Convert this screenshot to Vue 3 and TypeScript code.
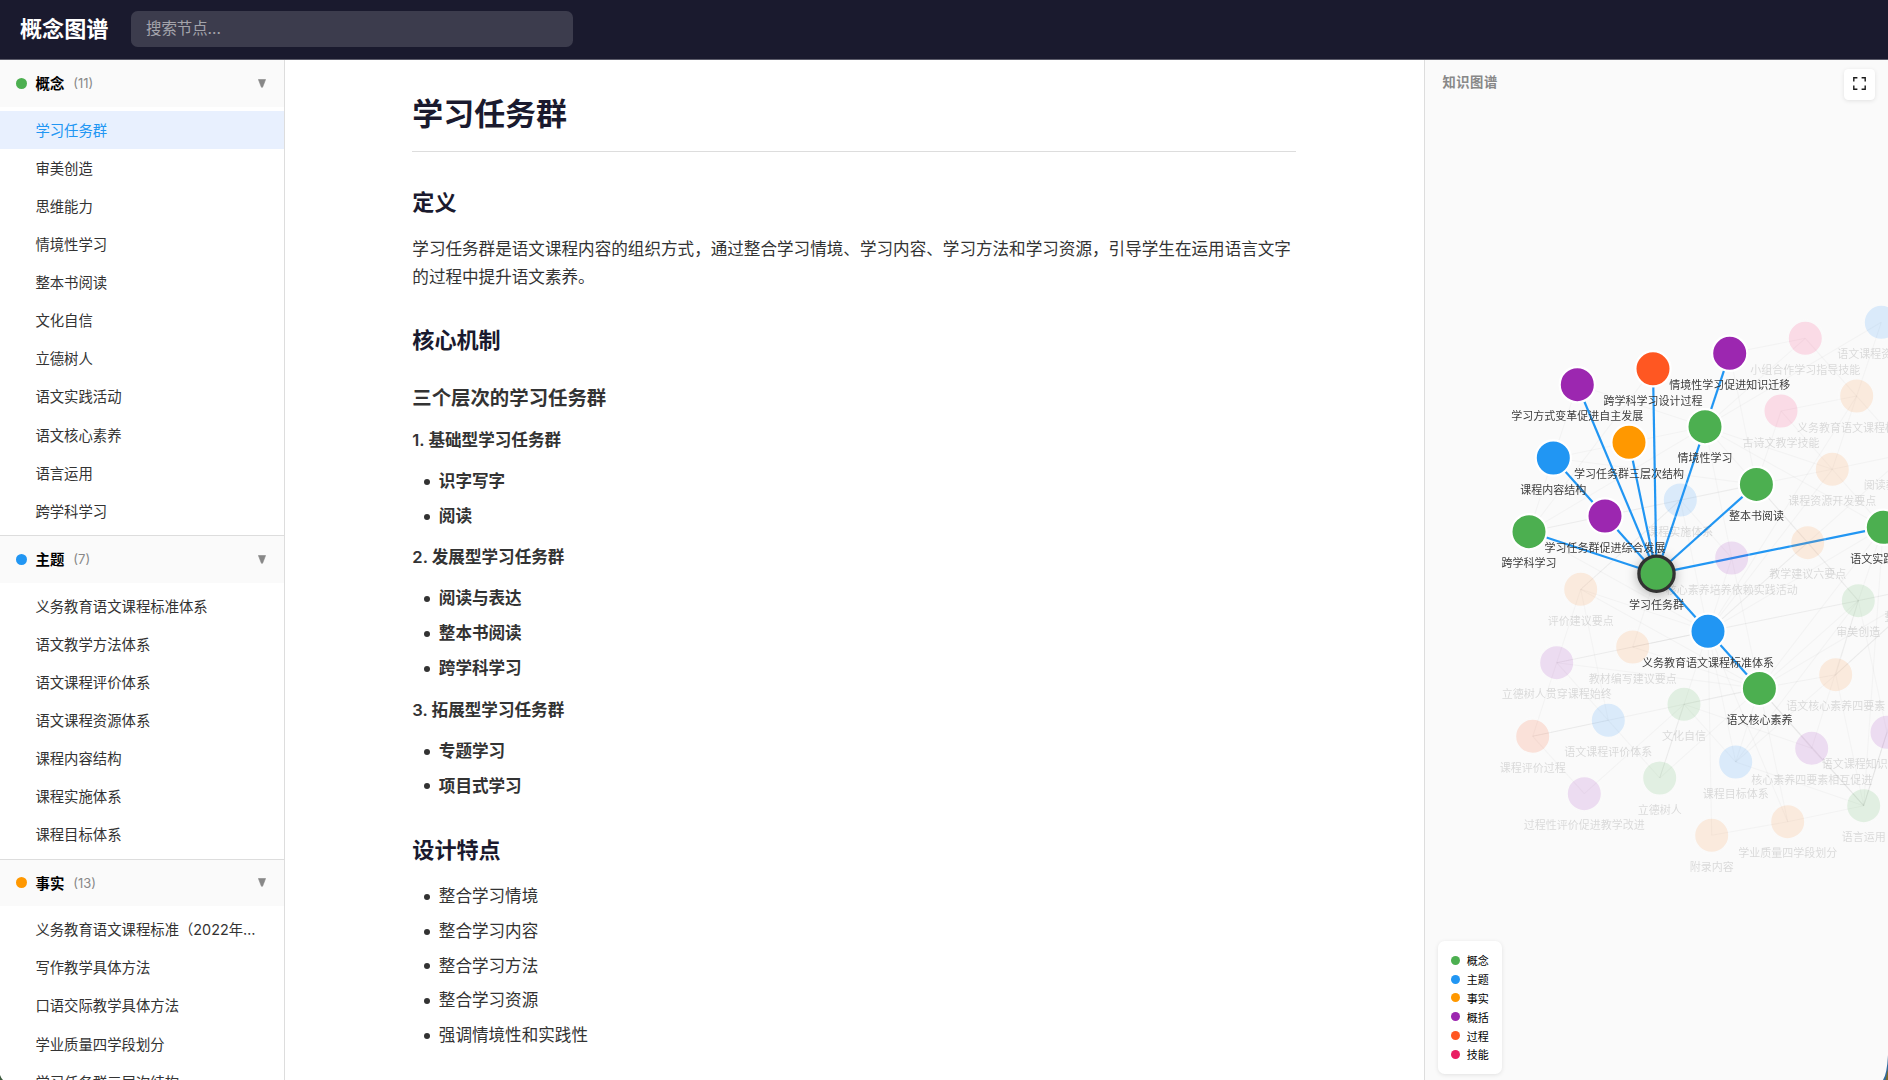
<script setup lang="ts">
type Kind = 'concept' | 'topic' | 'fact' | 'general' | 'process' | 'skill'

interface Section { name: string; count: number; kind: Kind; items: string[] }
interface GraphNode { id: string; x: number; y: number; kind: Kind; label: string; on?: boolean }

const colors: Record<Kind, string> = {
  concept: '#4caf50',
  topic: '#2196f3',
  fact: '#ff9800',
  general: '#9c27b0',
  process: '#ff5722',
  skill: '#e91e63',
}

// Fills used by nodes outside the current selection, drawn at low opacity
const dimColors: Record<Kind, string> = {
  ...colors,
  concept: '#5cb860',
  topic: '#2b95ff',
  fact: '#ff9440',
  general: '#a436c0',
  skill: '#ff2f78',
}

const sections: Section[] = [
  {
    name: '概念', count: 11, kind: 'concept',
    items: ['学习任务群', '审美创造', '思维能力', '情境性学习', '整本书阅读', '文化自信', '立德树人', '语文实践活动', '语文核心素养', '语言运用', '跨学科学习'],
  },
  {
    name: '主题', count: 7, kind: 'topic',
    items: ['义务教育语文课程标准体系', '语文教学方法体系', '语文课程评价体系', '语文课程资源体系', '课程内容结构', '课程实施体系', '课程目标体系'],
  },
  {
    name: '事实', count: 13, kind: 'fact',
    items: ['义务教育语文课程标准（2022年版）', '写作教学具体方法', '口语交际教学具体方法', '学业质量四学段划分', '学习任务群三层次结构'],
  },
]
const active = '学习任务群'

const groups = [
  { title: '1. 基础型学习任务群', items: ['识字写字', '阅读'] },
  { title: '2. 发展型学习任务群', items: ['阅读与表达', '整本书阅读', '跨学科学习'] },
  { title: '3. 拓展型学习任务群', items: ['专题学习', '项目式学习'] },
]
const features = ['整合学习情境', '整合学习内容', '整合学习方法', '整合学习资源', '强调情境性和实践性']

const legend: { name: string; kind: Kind }[] = [
  { name: '概念', kind: 'concept' },
  { name: '主题', kind: 'topic' },
  { name: '事实', kind: 'fact' },
  { name: '概括', kind: 'general' },
  { name: '过程', kind: 'process' },
  { name: '技能', kind: 'skill' },
]

const nodes: GraphNode[] = [
  { id: 'zy', x: 1881.3, y: 322.3, kind: 'topic', label: '语文课程资源体系' },
  { id: 'xz', x: 1805.3, y: 338.3, kind: 'skill', label: '小组合作学习指导技能' },
  { id: 'bz', x: 1856.7, y: 396, kind: 'fact', label: '义务教育语文课程标准...' },
  { id: 'gs', x: 1781, y: 411, kind: 'skill', label: '古诗文教学技能' },
  { id: 'kf', x: 1832.3, y: 469.3, kind: 'fact', label: '课程资源开发要点' },
  { id: 'yd', x: 1907.7, y: 453.5, kind: 'fact', label: '阅读教学具体方法' },
  { id: 'ss', x: 1680.3, y: 500, kind: 'topic', label: '课程实施体系' },
  { id: 'jy', x: 1807.7, y: 542.7, kind: 'fact', label: '教学建议六要点' },
  { id: 'yl', x: 1731.7, y: 558, kind: 'general', label: '核心素养培养依赖实践活动' },
  { id: 'sm', x: 1858.3, y: 600.7, kind: 'concept', label: '审美创造' },
  { id: 'zh', x: 1934, y: 585, kind: 'process', label: '整本书阅读过程设计' },
  { id: 'sys', x: 1835.7, y: 674.7, kind: 'fact', label: '语文核心素养四要素' },
  { id: 'zs', x: 1887, y: 732.3, kind: 'general', label: '语文课程知识结构化整合...' },
  { id: 'xh', x: 1811.7, y: 748.3, kind: 'general', label: '核心素养四要素相互促进' },
  { id: 'mb', x: 1735.7, y: 762, kind: 'topic', label: '课程目标体系' },
  { id: 'yy', x: 1863.7, y: 805.7, kind: 'concept', label: '语言运用' },
  { id: 'xy', x: 1787.7, y: 821.7, kind: 'fact', label: '学业质量四学段划分' },
  { id: 'fl', x: 1711.7, y: 835.3, kind: 'fact', label: '附录内容' },
  { id: 'wh', x: 1684, y: 704.3, kind: 'concept', label: '文化自信' },
  { id: 'ld', x: 1659.7, y: 778, kind: 'concept', label: '立德树人' },
  { id: 'pj', x: 1580.7, y: 589.3, kind: 'fact', label: '评价建议要点' },
  { id: 'gc', x: 1556.7, y: 662.7, kind: 'general', label: '立德树人贯穿课程始终' },
  { id: 'jc', x: 1632.7, y: 647, kind: 'fact', label: '教材编写建议要点' },
  { id: 'pt', x: 1608.3, y: 720.3, kind: 'topic', label: '语文课程评价体系' },
  { id: 'pg', x: 1532.7, y: 736.3, kind: 'process', label: '课程评价过程' },
  { id: 'gj', x: 1584.3, y: 793.7, kind: 'general', label: '过程性评价促进教学改进' },
  { id: 'fs', x: 1577.3, y: 384.7, kind: 'general', label: '学习方式变革促进自主发展', on: true },
  { id: 'sj', x: 1653, y: 368.8, kind: 'process', label: '跨学科学习设计过程', on: true },
  { id: 'qy', x: 1729.7, y: 353.3, kind: 'general', label: '情境性学习促进知识迁移', on: true },
  { id: 'sc', x: 1629, y: 442.3, kind: 'fact', label: '学习任务群三层次结构', on: true },
  { id: 'nr', x: 1553.3, y: 458, kind: 'topic', label: '课程内容结构', on: true },
  { id: 'fz', x: 1605, y: 516, kind: 'general', label: '学习任务群促进综合发展', on: true },
  { id: 'kx', x: 1529, y: 531.7, kind: 'concept', label: '跨学科学习', on: true },
  { id: 'qj', x: 1705, y: 426.7, kind: 'concept', label: '情境性学习', on: true },
  { id: 'zb', x: 1756.4, y: 484.4, kind: 'concept', label: '整本书阅读', on: true },
  { id: 'sjh', x: 1883.3, y: 527.3, kind: 'concept', label: '语文实践活动', on: true },
  { id: 'tx', x: 1708, y: 631.3, kind: 'topic', label: '义务教育语文课程标准体系', on: true },
  { id: 'hx', x: 1759.4, y: 688.4, kind: 'concept', label: '语文核心素养', on: true },
]
const focus: GraphNode = { id: 'rw', x: 1656.5, y: 573.7, kind: 'concept', label: '学习任务群', on: true }

const at = new Map([...nodes, focus].map((n) => [n.id, n] as const))

const toLines = (list: string) =>
  list.split(' ').map((pair) => {
    const [a, b] = pair.split('-').map((id) => at.get(id)!)
    return { x1: a.x, y1: a.y, x2: b.x, y2: b.y }
  })

const faint = toLines(
  'fs-kx fs-qj sj-kx qy-zb qy-xz xz-qj xz-yd zy-bz zy-qj gs-sjh gs-zb bz-gs bz-kf ' +
  'kf-zb kf-yd kf-qj ss-qj ss-yl ss-zb ss-tx ss-pj nr-qj nr-zb kx-ss kx-tx kx-zb kx-qj ' +
  'pj-gc pj-pt pj-tx pj-ss pj-hx gc-jc gc-tx gc-pt gc-pg gc-hx jc-tx jc-ss jc-hx pt-ld pg-pt pg-gj gj-wh ' +
  'wh-hx wh-tx wh-ld wh-mb wh-xh ld-hx mb-tx mb-hx mb-sys mb-sm mb-yy fl-tx fl-xy xy-tx xy-hx xy-yy ' +
  'yl-hx yl-sjh yl-qj yl-tx jy-sjh jy-tx jy-sm tx-sm tx-sjh tx-zh tx-kf tx-bz tx-yd hx-sm hx-sjh hx-yy hx-zh ' +
  'xh-hx xh-sm xh-yy sys-yy sys-zh sm-sjh sm-zh sm-zs yy-zs yy-sjh yy-zh qj-sjh qj-jy',
)
const firm = toLines('pg-hx wh-ld hx-sys sys-sm hx-yy jy-zb jy-sm jc-tx sys-zh yy-zs')
const strong = toLines('rw-fs rw-sj rw-qy rw-sc rw-nr rw-kx rw-zb rw-sjh rw-hx')
</script>

<template>
  <div class="app">
    <header class="topbar">
      <div class="brand">概念图谱</div>
      <input class="search" type="text" placeholder="搜索节点..." />
    </header>

    <div class="body">
      <aside class="sidebar">
        <section v-for="s in sections" :key="s.name" class="section">
          <div class="section-head">
            <span class="dot" :style="{ background: colors[s.kind] }"></span>
            <span class="section-name">{{ s.name }}</span>
            <span class="section-count">({{ s.count }})</span>
            <svg class="caret" width="8" height="9" viewBox="0 0 8 9"><path d="M.4.5h7.2L4.6 8.2H3.4z" fill="#888" stroke="#888" stroke-width=".6" /></svg>
          </div>
          <ul class="items">
            <li v-for="i in s.items" :key="i" class="item" :class="{ active: i === active }">{{ i }}</li>
          </ul>
        </section>
      </aside>

      <main class="content">
        <article class="article">
          <h1>学习任务群</h1>
          <h2>定义</h2>
          <p>学习任务群是语文课程内容的组织方式，通过整合学习情境、学习内容、学习方法和学习资源，引导学生在运用语言文字的过程中提升语文素养。</p>
          <h2 class="after-text">核心机制</h2>
          <h3>三个层次的学习任务群</h3>
          <template v-for="g in groups" :key="g.title">
            <p class="group">{{ g.title }}</p>
            <ul class="list strong">
              <li v-for="i in g.items" :key="i">{{ i }}</li>
            </ul>
          </template>
          <h2 class="before-list">设计特点</h2>
          <ul class="list plain">
            <li v-for="f in features" :key="f">{{ f }}</li>
          </ul>
        </article>
      </main>

      <aside class="graph">
        <svg class="canvas" width="463" height="1020" viewBox="1425 60 463 1020">
          <defs>
            <filter id="glow" x="-60%" y="-60%" width="220%" height="220%">
              <feDropShadow dx="0" dy="2" stdDeviation="6" flood-color="#000" flood-opacity="0.3" />
            </filter>
          </defs>
          <g stroke="#888" stroke-width="1.1">
            <line v-for="(l, i) in faint" :key="i" v-bind="l" stroke-opacity="0.055" />
            <line v-for="(l, i) in firm" :key="'f' + i" v-bind="l" stroke-opacity="0.08" />
          </g>
          <g stroke="#2196f3" stroke-width="2.2">
            <line v-for="(l, i) in strong" :key="i" v-bind="l" />
          </g>
          <g v-for="n in nodes" :key="n.id" :opacity="n.on ? 1 : 0.15">
            <circle :cx="n.x" :cy="n.y" r="17.6" :fill="n.on ? colors[n.kind] : dimColors[n.kind]" stroke="#fff" stroke-width="2.2" />
          </g>
          <circle :cx="focus.x" :cy="focus.y" r="17.6" :fill="colors[focus.kind]" stroke="#333" stroke-width="3.3" filter="url(#glow)" />
          <g class="labels">
            <text v-for="n in [...nodes, focus]" :key="n.id" :x="n.x" :y="n.y + 35.7" :opacity="n.on ? 0.95 : 0.16">{{ n.label }}</text>
          </g>
        </svg>
        <div class="graph-title">知识图谱</div>
        <button class="expand" aria-label="全屏">
          <svg width="13" height="13" viewBox="0 0 13 13" fill="none" stroke="#1a1a1a" stroke-width="1.4">
            <path d="M.8 4.4V.8h3.6M8.6.8h3.6v3.6M12.2 8.6v3.6H8.6M4.4 12.2H.8V8.6" />
          </svg>
        </button>
        <div class="legend">
          <div v-for="l in legend" :key="l.name" class="legend-row">
            <span class="legend-dot" :style="{ background: colors[l.kind] }"></span>{{ l.name }}
          </div>
        </div>
      </aside>
    </div>
    <svg class="corner right" width="5" height="25" viewBox="0 0 5 25"><path d="M5 0V25H0Q4 19 5 0z" fill="#2f6a9e" /><path d="M5 14V25H2.5z" fill="#7d6a2c" /></svg>
    <svg class="corner left" width="3" height="5" viewBox="0 0 3 5"><path d="M0 0Q1 3 3 5H0z" fill="#3d5a3d" /></svg>
  </div>
</template>

<style>
body {
  margin: 0;
  overflow: hidden;
}
</style>

<style scoped>
.app {
  position: relative;
  display: flex;
  flex-direction: column;
  width: 100%;
  height: 1080px;
  overflow: hidden;
  background: #fff;
  color: #333;
  font-family: Inter, "Noto Sans CJK SC", sans-serif;
}
h1, h2, h3, p, ul { margin: 0; padding: 0; }
ul { list-style: none; }

.topbar {
  box-sizing: border-box;
  flex: none;
  height: 60px;
  display: flex;
  align-items: center;
  padding: 0 20px 1px;
  background: #1a1a2e;
  border-bottom: 1px solid #5c5c6a;
}
.brand {
  width: 110.6px;
  padding-bottom: 1px;
  color: #fff;
  font-size: 22.1px;
  font-weight: 600;
  line-height: 32px;
}
.search {
  box-sizing: border-box;
  width: 442px;
  height: 35.4px;
  padding: 0 15px 1px 15.4px;
  border: 0;
  border-radius: 6.6px;
  background: rgba(255, 255, 255, 0.15);
  color: #fff;
  font: 15.4px Inter, "Noto Sans CJK SC", sans-serif;
}
.search::placeholder { color: rgba(255, 255, 255, 0.55); }

.body {
  flex: 1;
  display: flex;
  min-height: 0;
}

.sidebar {
  box-sizing: border-box;
  flex: none;
  width: 285px;
  overflow: hidden;
  border-right: 1px solid #ddd;
}
.section { border-bottom: 1px solid #ddd; }
.section-head {
  box-sizing: border-box;
  display: flex;
  align-items: center;
  height: 46.9px;
  padding: 0 18.5px 0.6px 15.5px;
  background: #fafafa;
}
.dot {
  width: 11px;
  height: 11px;
  margin-right: 9px;
  border-radius: 50%;
}
.section-name {
  padding-bottom: 1px;
  color: #000;
  font-size: 14.4px;
  font-weight: 600;
}
.section-count {
  margin-left: 9px;
  color: #888;
  font-size: 13px;
}
.caret { margin-left: auto; }
.items { padding: 4.4px 0; }
.item {
  box-sizing: border-box;
  height: 38.13px;
  padding: 0.3px 26px 0 35.4px;
  font-size: 14.36px;
  line-height: 38px;
  white-space: nowrap;
  overflow: hidden;
  text-overflow: ellipsis;
}
.item.active {
  background: #e8f0fe;
  color: #2196f3;
}

.content {
  flex: 1;
  min-width: 0;
  display: flex;
  justify-content: center;
  padding-right: 0.4px;
  overflow: hidden;
}
.article {
  width: 884px;
  padding-top: 33.5px;
  font-size: 16.58px;
  line-height: 28.2px;
}
h1 {
  padding-bottom: 17px;
  border-bottom: 1px solid #ddd;
  color: #1a1a2e;
  font-size: 30.95px;
  font-weight: 600;
  line-height: 40px;
}
h2 {
  margin: 35px 0 18px;
  color: #1a1a2e;
  font-size: 22.1px;
  font-weight: 600;
  line-height: 30px;
}
h2.after-text { margin-top: 34.5px; }
h2.before-list { margin-bottom: 17.2px; }
h3 {
  margin: 28.5px 0 14px;
  font-size: 19.4px;
  font-weight: 600;
  line-height: 28px;
}
.group {
  margin-bottom: 12.9px;
  font-weight: 600;
}
.list { padding-left: 26.5px; }
.list.strong {
  margin-bottom: 13.3px;
  font-weight: 600;
}
.list li {
  position: relative;
  margin-bottom: 6.65px;
}
.list li:last-child { margin-bottom: 0; }
.list li::before {
  content: "";
  position: absolute;
  left: -14.4px;
  top: 11.8px;
  width: 6px;
  height: 6px;
  border-radius: 50%;
  background: #333;
}

.graph {
  position: relative;
  box-sizing: border-box;
  flex: none;
  width: 464px;
  overflow: hidden;
  border-left: 1px solid #ddd;
  background: #fafafa;
}
.canvas { display: block; }
.labels {
  fill: #333;
  font-size: 11px;
  text-anchor: middle;
}
.graph-title {
  position: absolute;
  left: 17.5px;
  top: 11.5px;
  color: #888;
  font-size: 13.3px;
  font-weight: 600;
  line-height: 20px;
  letter-spacing: 0.5px;
}
.expand {
  position: absolute;
  top: 8.5px;
  right: 13px;
  display: flex;
  align-items: center;
  justify-content: center;
  width: 31px;
  height: 31px;
  padding: 0 0 2px;
  border: 0;
  border-radius: 4.4px;
  background: #fff;
  box-shadow: 0 1px 4px rgba(0, 0, 0, 0.1);
}
.legend {
  position: absolute;
  left: 13px;
  bottom: 5.6px;
  box-sizing: border-box;
  width: 64px;
  height: 133.6px;
  padding: 10.2px 13px;
  border-radius: 6.6px;
  background: #fff;
  box-shadow: 0 1px 4px rgba(0, 0, 0, 0.1);
  color: #000;
  font-size: 11px;
}
.legend-row {
  display: flex;
  align-items: center;
  height: 18.8px;
  white-space: nowrap;
}
.legend-dot {
  width: 9px;
  height: 9px;
  margin-right: 6.8px;
  border-radius: 50%;
}
.corner {
  position: absolute;
  bottom: 0;
}
.corner.right { right: 0; }
.corner.left { left: 0; }
</style>
